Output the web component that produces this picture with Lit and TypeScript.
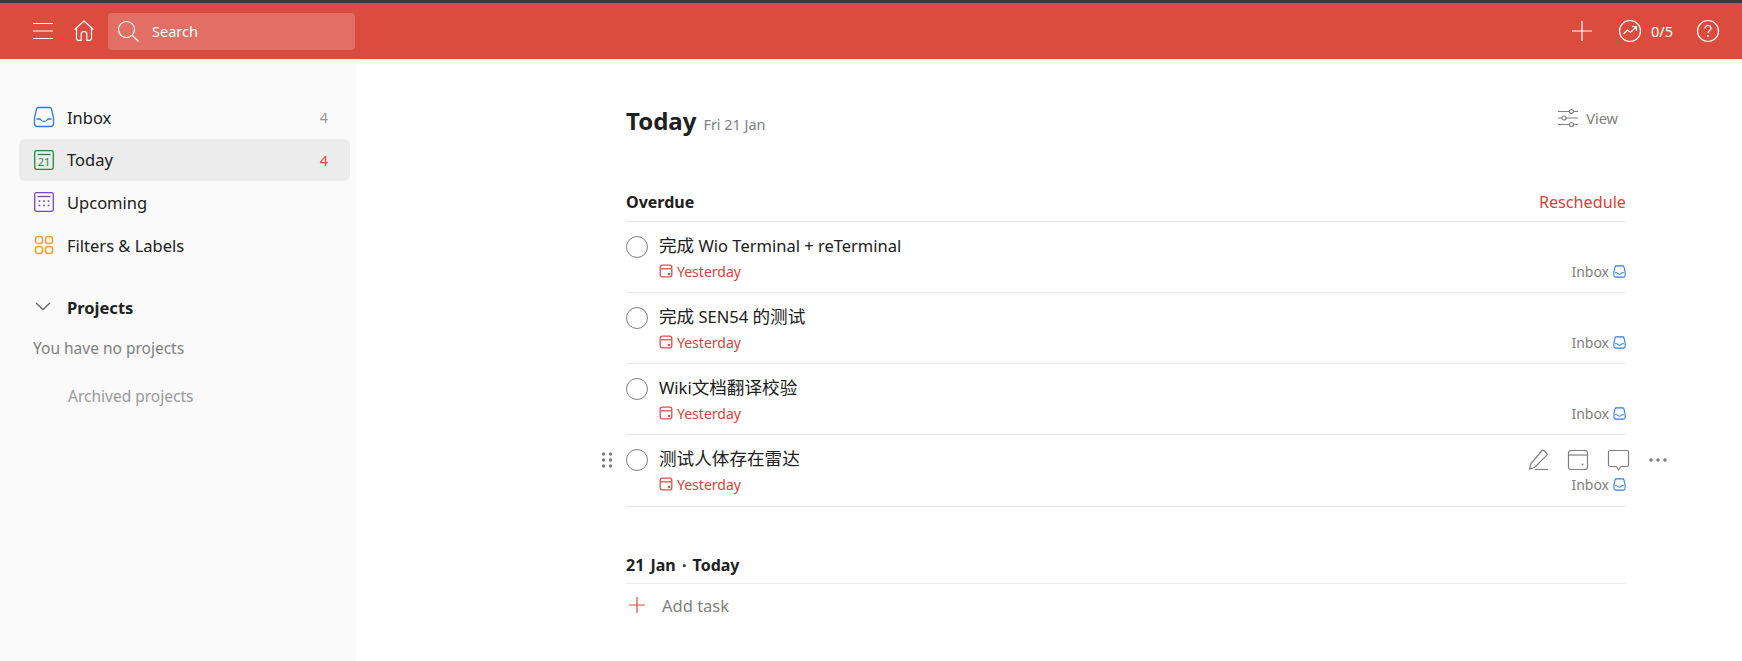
import { css, html, LitElement, svg } from "lit";
import { customElement } from "lit/decorators.js";
import { map } from "lit/directives/map.js";

const TASKS = [
  { title: "完成 Wio Terminal + reTerminal" },
  { title: "完成 SEN54 的测试" },
  { title: "Wiki文档翻译校验" },
  { title: "测试人体存在雷达", hover: true },
];

// CJK glyphs sit a bit larger than the latin ones in the reference
const titleRuns = (title: string) =>
  title
    .split(/([\u4e00-\u9fff]+)/)
    .filter(Boolean)
    .map((run) => (/[\u4e00-\u9fff]/.test(run) ? html`<span class="cjk">${run}</span>` : run));

const inboxIcon = (size: number, weight: number) => html`
  <svg width=${size} height=${size} viewBox="0 0 22 22" fill="none" stroke="#2f7be6" stroke-width=${weight}>
    <path d="M5.500 1.500h11c1 0 1.800.6 2 1.500L20.500 12v5.500c0 1.700-1.300 3-3 3h-13c-1.700 0-3-1.300-3-3V12l2-9c.2-.9 1-1.500 2-1.500z" />
    <path d="M3.500 13h3c.7 0 1.100.4 1.500 1 .6.9 1.600 1.500 3 1.500s2.400-.6 3-1.500c.4-.6.8-1 1.500-1h3" />
  </svg>
`;

const dueIcon = html`
  <svg width="14" height="14" viewBox="0 0 14 14" fill="none" stroke="#d9534a" stroke-width="1.300">
    <rect x="1.200" y="1.200" width="11.600" height="11.600" rx="2" />
    <path d="M1.500 4.800h11" />
    <circle cx="10" cy="10" r=".6" fill="#d9534a" />
  </svg>
`;

const actionIcons = html`
  <svg class="action" width="24" height="24" viewBox="0 0 24 24" fill="none" stroke="#808080" stroke-width="1.200">
    <path d="M17.800 2.500l3 3c.5.5.5 1.200 0 1.700L8.500 19.500 3.500 21l1.300-5.200L16.100 2.500c.5-.5 1.200-.5 1.700 0z" />
    <path d="M9 21.500h13" />
  </svg>
  <svg class="action" width="24" height="24" viewBox="0 0 24 24" fill="none" stroke="#808080" stroke-width="1.200">
    <rect x="2.500" y="2.500" width="19" height="19" rx="2.500" />
    <path d="M3 7h18" />
    <circle cx="16.500" cy="16.500" r="1" fill="#808080" stroke="none" />
  </svg>
  <svg class="action" width="24" height="24" viewBox="0 0 24 24" fill="none" stroke="#808080" stroke-width="1.200">
    <path d="M4 2.500h17c.9 0 1.500.6 1.500 1.500v13c0 .9-.6 1.500-1.500 1.500h-6L12.500 22 10.500 18.500H4c-.9 0-1.500-.6-1.500-1.500V4c0-.9.6-1.500 1.500-1.500z" />
  </svg>
  <svg class="action" width="24" height="24" viewBox="0 0 24 24" fill="#808080">
    <circle cx="5" cy="12" r="1.800" /><circle cx="12" cy="12" r="1.800" /><circle cx="19" cy="12" r="1.800" />
  </svg>
`;

const navIcons = {
  inbox: inboxIcon(22, 1.3),
  today: html`
    <svg width="22" height="22" viewBox="0 0 22 22" fill="none" stroke="#1f8a3d" stroke-width="1.300">
      <rect x="1.700" y="1.700" width="18.600" height="18.600" rx="1.800" />
      <path d="M4.500 5.500h13" />
      <text x="11" y="16.500" text-anchor="middle" font-size="11" fill="#1f8a3d" stroke="none" font-family="Noto Sans">21</text>
    </svg>
  `,
  upcoming: html`
    <svg width="22" height="22" viewBox="0 0 22 22" fill="none" stroke="#7a44c9" stroke-width="1.300">
      <rect x="1.700" y="1.700" width="18.600" height="18.600" rx="1.800" />
      <path d="M4.500 5.500h13" />
      <g fill="#7a44c9" stroke="none">
        ${[6.500, 11, 15.500].flatMap((x) => [10, 14.500].map((y) => svg`<rect x=${x - 0.8} y=${y - 0.8} width="1.600" height="1.600" />`))}
      </g>
    </svg>
  `,
  filters: html`
    <svg width="22" height="22" viewBox="0 0 22 22" fill="none" stroke="#f2a33c" stroke-width="1.700">
      <rect x="2.500" y="2.500" width="7" height="7" rx="2.500" />
      <rect x="12.500" y="2.500" width="7" height="7" rx="2.500" />
      <rect x="2.500" y="12.500" width="7" height="7" rx="2.500" />
      <rect x="12.500" y="12.500" width="7" height="7" rx="2.500" />
    </svg>
  `,
};

const NAV = [
  { label: "Inbox", icon: navIcons.inbox, count: "4" },
  { label: "Today", icon: navIcons.today, count: "4", active: true },
  { label: "Upcoming", icon: navIcons.upcoming },
  { label: "Filters & Labels", icon: navIcons.filters },
];

@customElement("app-root")
export class AppRoot extends LitElement {
  static styles = css`
    :host {
      display: block;
      height: 661px;
      overflow: hidden;
      background: #fff;
      color: #202020;
      font-family: "Noto Sans", "Noto Sans CJK SC", sans-serif;
      font-size: 16px;
    }

    .topbar {
      height: 56px;
      background: #db4c3f;
      border-top: 3px solid #3b3b3b;
      display: flex;
      align-items: center;
      padding: 0 22px 0 32px;
      color: #fff;
    }

    .topbar svg {
      display: block;
      flex: none;
    }

    .home {
      margin-left: 18.500px;
    }

    .search {
      margin-left: 13.500px;
      width: 247px;
      height: 37px;
      border-radius: 4px;
      background: rgba(255, 255, 255, 0.2);
      display: flex;
      align-items: center;
      gap: 12px;
      padding-left: 8px;
      box-sizing: border-box;
      font-size: 14.500px;
    }

    .right {
      margin-left: auto;
      display: flex;
      align-items: center;
      font-size: 14.500px;
    }

    .goal {
      margin-left: 25.500px;
      margin-right: 9px;
    }

    .help {
      margin-left: 23px;
    }

    .body {
      display: flex;
      height: 602px;
    }

    .sidebar {
      width: 356px;
      flex: none;
      background: #fafafa;
      box-sizing: border-box;
      padding: 37px 6px 0 19px;
    }

    .nav-item {
      height: 42.600px;
      display: flex;
      align-items: center;
      padding: 0 22px 0 14px;
      border-radius: 6px;
      gap: 12px;
      font-size: 16.500px;
    }

    .nav-item svg {
      flex: none;
      display: block;
    }

    .nav-item.active {
      background: #ececec;
    }

    .count {
      margin-left: auto;
      font-size: 14.500px;
      color: #9a9a9a;
    }

    .active .count {
      color: #e5483d;
    }

    .projects {
      margin-top: 20px;
      height: 42px;
      display: flex;
      align-items: center;
      gap: 14px;
      padding-left: 14px;
      font-weight: 700;
      font-size: 16.500px;
    }

    .no-projects {
      padding-left: 14px;
      margin-top: 9px;
      font-size: 15.500px;
      color: #808080;
    }

    .archived {
      padding-left: 49px;
      margin-top: 26px;
      font-size: 15.500px;
      color: #999;
    }

    .main {
      flex: 1;
      padding-left: 270px;
    }

    .content {
      width: 1000px;
    }

    .head {
      display: flex;
      align-items: baseline;
      padding-top: 44px;
      height: 58px;
    }

    h1 {
      margin: 0;
      font-size: 24px;
      font-weight: 700;
      line-height: 36px;
    }

    .date {
      margin-left: 7px;
      font-size: 14.400px;
      color: #808080;
    }

    .view {
      margin: 4px 8px 0 auto;
      display: flex;
      align-items: center;
      gap: 7px;
      align-self: flex-start;
      font-size: 14.500px;
      color: #808080;
    }

    .section {
      display: flex;
      align-items: center;
      justify-content: space-between;
      height: 38px;
      padding-top: 2px;
      border-bottom: 1px solid #ececec;
      font-weight: 700;
      font-size: 16px;
    }

    .overdue {
      margin-top: 20px;
    }

    .today-section {
      margin-top: 36px;
      height: 36px;
      padding-top: 4px;
      word-spacing: 2px;
    }

    .reschedule {
      font-weight: 400;
      color: #d1453b;
      font-size: 16.200px;
    }

    .task {
      position: relative;
      height: 70px;
      border-bottom: 1px solid #ececec;
      display: grid;
      grid-template-columns: 33px 1fr auto;
      grid-template-rows: 39px 20px;
    }

    .task.hover {
      height: 71px;
    }

    .check {
      width: 20px;
      height: 20px;
      border-radius: 50%;
      border: 1.300px solid #808080;
      margin-top: 14px;
    }

    .title {
      grid-column: 2 / 4;
      padding-top: 9px;
      line-height: 28px;
      font-size: 16.500px;
    }

    .cjk {
      font-size: 17.600px;
    }

    .due {
      grid-column: 2;
      display: flex;
      align-items: center;
      gap: 4px;
      font-size: 14px;
      color: #d1453b;
    }

    .due svg,
    .place svg {
      display: block;
    }

    .place {
      grid-column: 3;
      display: flex;
      align-items: center;
      gap: 4px;
      font-size: 14px;
      color: #808080;
    }

    .handle {
      position: absolute;
      left: -25px;
      top: 16px;
      display: block;
    }

    .actions {
      position: absolute;
      right: -44px;
      top: 13px;
      display: flex;
      gap: 16px;
    }

    .action {
      display: block;
    }

    .add {
      display: flex;
      align-items: center;
      gap: 16px;
      height: 42px;
      font-size: 16.500px;
      color: #808080;
    }

    .add svg {
      display: block;
      margin-left: 2px;
    }
  `;

  render() {
    return html`
      <div class="topbar">
        <svg width="22" height="22" viewBox="0 0 22 22" stroke="#fff" stroke-width="1.200">
          <path d="M1 3.500h20M1 11h20M1 18.500h20" />
        </svg>
        <svg class="home" width="22" height="22" viewBox="0 0 22 22" fill="none" stroke="#fff" stroke-width="1.200">
          <path d="M1.500 9.500L11 1l9.500 8.500M3.500 8v10.500c0 1 .6 1.800 1.800 1.800h2.900v-6c0-1.500 1.300-2.800 2.800-2.800s2.800 1.300 2.800 2.800v6h2.900c1.200 0 1.800-.8 1.800-1.800V8" />
        </svg>
        <div class="search">
          <svg width="24" height="24" viewBox="0 0 24 24" fill="none" stroke="#fff" stroke-width="1.200">
            <circle cx="10.500" cy="10.500" r="8" />
            <path d="M16.500 16.500l6 6" />
          </svg>
          <span>Search</span>
        </div>
        <div class="right">
          <svg width="22" height="22" viewBox="0 0 22 22" stroke="#fff" stroke-width="1.200">
            <path d="M11 1v20M1 11h20" />
          </svg>
          <svg class="goal" width="24" height="24" viewBox="0 0 24 24" fill="none" stroke="#fff" stroke-width="1.200">
            <circle cx="12" cy="12" r="10.500" />
            <path d="M5.500 15l4-4 3 2.500 5.500-5.500M14 7.500h4.500V12" />
          </svg>
          <span>0/5</span>
          <svg class="help" width="24" height="24" viewBox="0 0 24 24" fill="none" stroke="#fff" stroke-width="1.200">
            <circle cx="12" cy="12" r="10.500" />
            <path d="M9 9.500c0-1.800 1.300-3 3-3s3 1.200 3 2.800c0 2.400-3 2.400-3 4.700" />
            <circle cx="12" cy="17" r=".9" fill="#fff" stroke="none" />
          </svg>
        </div>
      </div>
      <div class="body">
        <aside class="sidebar">
          ${map(
            NAV,
            (item) => html`
              <div class="nav-item ${item.active ? "active" : ""}">
                ${item.icon}
                <span>${item.label}</span>
                ${item.count ? html`<span class="count">${item.count}</span>` : null}
              </div>
            `,
          )}
          <div class="projects">
            <svg width="20" height="12" viewBox="0 0 20 12" fill="none" stroke="#666" stroke-width="1.300">
              <path d="M3 2l7 6.500L17 2" />
            </svg>
            <span>Projects</span>
          </div>
          <div class="no-projects">You have no projects</div>
          <div class="archived">Archived projects</div>
        </aside>
        <main class="main">
          <div class="content">
            <div class="head">
              <h1>Today</h1>
              <span class="date">Fri 21 Jan</span>
              <div class="view">
                <svg width="22" height="22" viewBox="0 0 22 22" fill="#fff" stroke="#808080" stroke-width="1.200">
                  <path d="M1 4.500h20M1 11h20M1 17.500h20" />
                  <circle cx="14.500" cy="4.500" r="2" /><circle cx="7" cy="11" r="2" /><circle cx="14.500" cy="17.500" r="2" />
                </svg>
                <span>View</span>
              </div>
            </div>
            <div class="section overdue">
              <span>Overdue</span>
              <span class="reschedule">Reschedule</span>
            </div>
            ${map(
              TASKS,
              (task) => html`
                <div class="task ${task.hover ? "hover" : ""}">
                  ${task.hover
                    ? html`<svg class="handle" width="12" height="18" viewBox="0 0 12 18" fill="#808080">
                        ${[2.500, 9.500].flatMap((x) => [3, 9, 15].map((y) => svg`<circle cx=${x} cy=${y} r="1.700" />`))}
                      </svg>`
                    : null}
                  <div class="check"></div>
                  <div class="title">${titleRuns(task.title)}</div>
                  <div class="due">${dueIcon}<span>Yesterday</span></div>
                  <div class="place"><span>Inbox</span>${inboxIcon(13, 1.8)}</div>
                  ${task.hover ? html`<div class="actions">${actionIcons}</div>` : null}
                </div>
              `,
            )}
            <div class="section today-section"><span>21 Jan · Today</span></div>
            <div class="add">
              <svg width="18" height="18" viewBox="0 0 18 18" stroke="#db4c3f" stroke-width="1.200">
                <path d="M9 1v16M1 9h16" />
              </svg>
              <span>Add task</span>
            </div>
          </div>
        </main>
      </div>
    `;
  }
}
